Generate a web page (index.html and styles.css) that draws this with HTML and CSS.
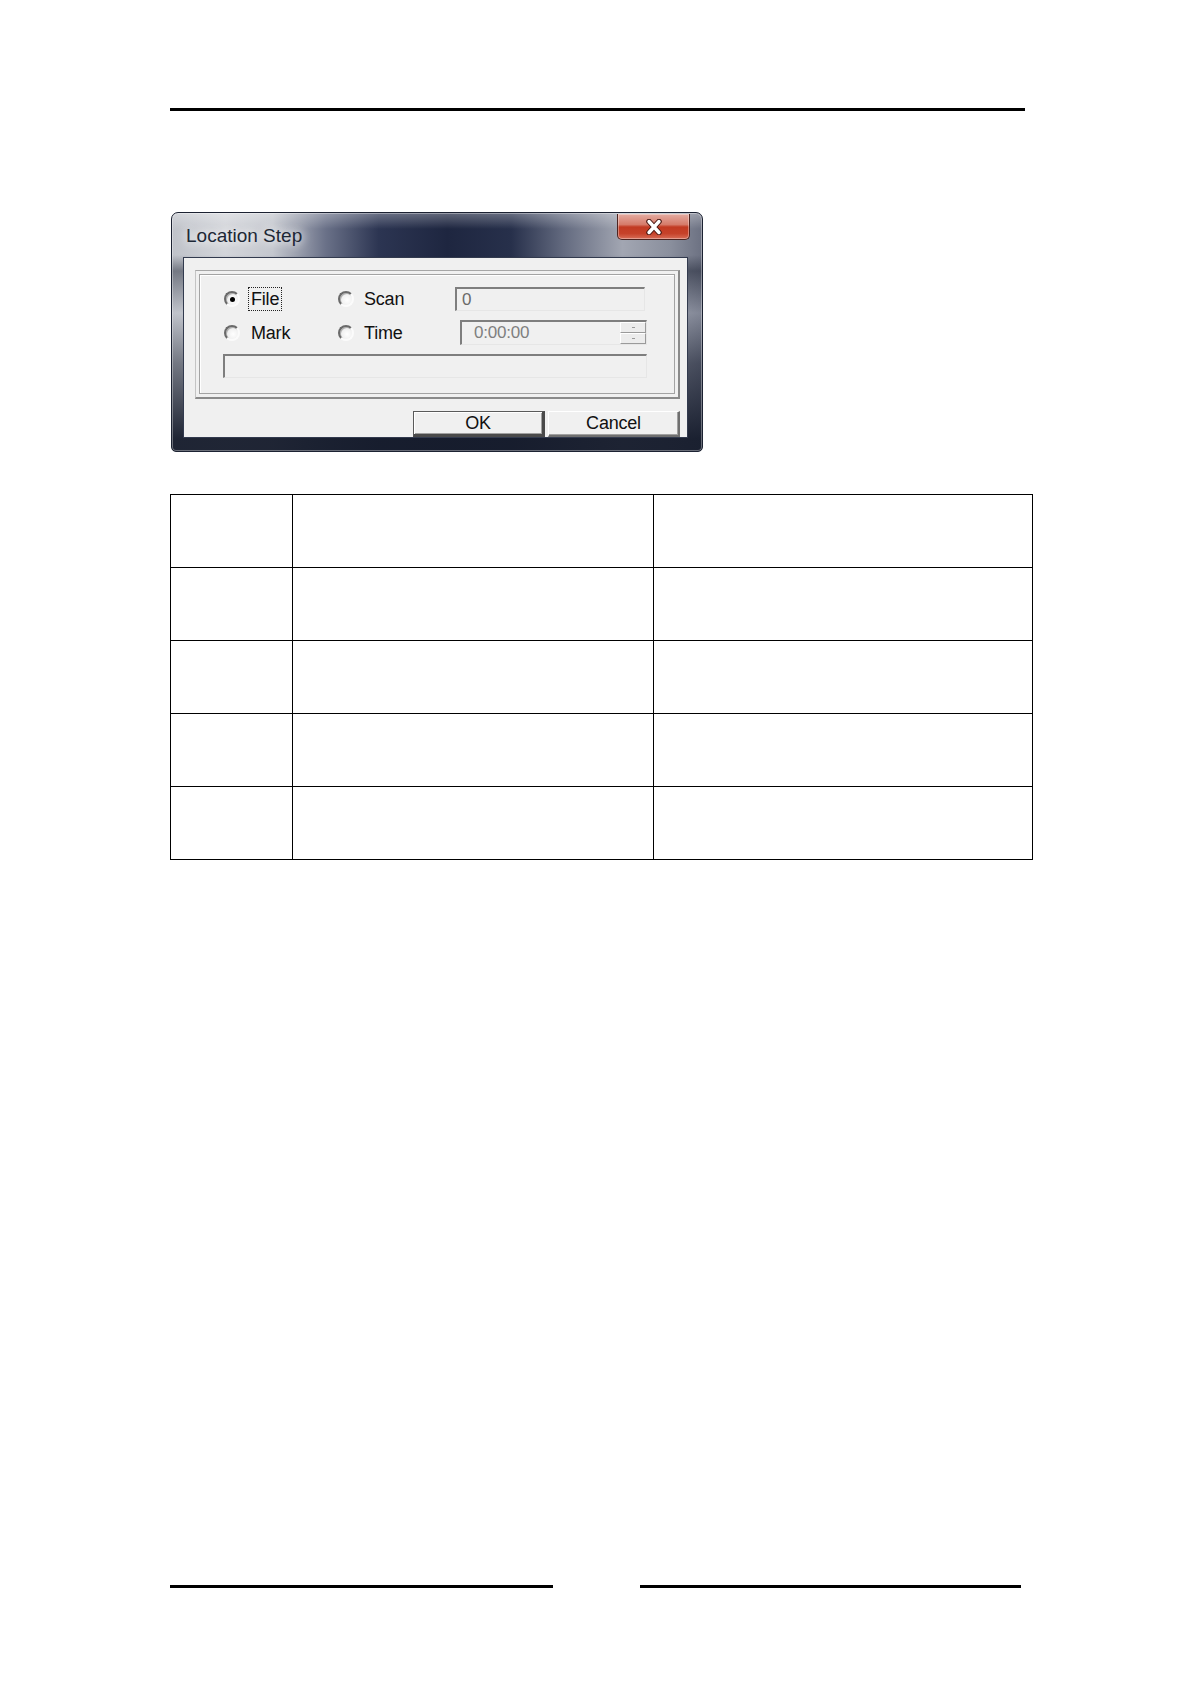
FILE: index.html
```html
<!DOCTYPE html>
<html lang="en">
<head>
<meta charset="utf-8">
<title>Location Step</title>
<link rel="stylesheet" href="styles.css">
</head>
<body>
<div class="page">
  <div class="rule rule-top"></div>

  <div class="dialog">
    <div class="titlebar">
      <span class="title">Location Step</span>
      <div class="close">
        <svg width="20" height="16" viewBox="0 0 20 16">
          <path d="M5 2.5 L15 13.5 M15 2.5 L5 13.5" stroke="#4a1a14" stroke-width="5.5" stroke-linecap="round" fill="none"/>
          <path d="M5 2.5 L15 13.5 M15 2.5 L5 13.5" stroke="#ffffff" stroke-width="3.4" stroke-linecap="round" fill="none"/>
        </svg>
      </div>
    </div>
    <div class="client">
      <div class="panel">
        <div class="panel-inner">
          <div class="grid">
            <div class="opt c1"><span class="radio checked"></span><span class="lbl focus">File</span></div>
            <div class="opt c2"><span class="radio"></span><span class="lbl">Scan</span></div>
            <div class="edit num"><span>0</span></div>
            <div class="opt c1"><span class="radio"></span><span class="lbl">Mark</span></div>
            <div class="opt c2"><span class="radio"></span><span class="lbl">Time</span></div>
            <div class="edit time"><span>0:00:00</span><div class="spin"><i></i><i></i></div></div>
          </div>
          <div class="status"></div>
        </div>
      </div>
      <div class="buttons">
        <div class="btn default">OK</div>
        <div class="btn">Cancel</div>
      </div>
    </div>
  </div>

  <table class="grid-table">
    <colgroup><col class="w1"><col class="w2"><col class="w3"></colgroup>
    <tr><td></td><td></td><td></td></tr>
    <tr><td></td><td></td><td></td></tr>
    <tr><td></td><td></td><td></td></tr>
    <tr><td></td><td></td><td></td></tr>
    <tr><td></td><td></td><td></td></tr>
  </table>

  <div class="footer">
    <div class="rule rule-left"></div>
    <div class="rule rule-right"></div>
  </div>
</div>
</body>
</html>
```
FILE: styles.css
```css
html, body { margin: 0; padding: 0; background: #ffffff; }
body { font-family: "Liberation Sans", Arial, sans-serif; }

.page { padding-left: 170px; padding-top: 108px; }

.rule { height: 3px; background: #000; }
.rule-top { width: 855px; }

/* ---------- dialog ---------- */
.dialog {
  margin-top: 101px;
  margin-left: 1px;
  width: 530px;
  height: 238px;
  border: 1px solid #1c2232;
  border-radius: 7px 7px 5px 5px;
  display: flex;
  flex-direction: column;
  box-shadow: inset 0 0 0 1px rgba(255,255,255,0.35);
  background:
    linear-gradient(180deg, rgba(255,255,255,0.30) 0, rgba(255,255,255,0) 16px),
    linear-gradient(180deg, rgba(22,28,44,0) 0, rgba(22,28,44,0) 42px, rgba(22,28,44,0.45) 58px, rgba(190,194,204,0.25) 100px, rgba(22,28,44,0.45) 150px, rgba(22,28,44,0.95) 226px),
    linear-gradient(90deg, #bfc2c9 0%, #d3d5da 10%, #c4c7ce 19%, #6a7188 29%, #2c3552 39%, #1e2640 52%, #27304b 64%, #646b80 74%, #a2a6b2 85%, #8a8f9d 94%, #6c7182 100%);
  overflow: hidden;
}

.titlebar {
  height: 44px;
  display: flex;
  justify-content: space-between;
  align-items: flex-start;
  padding-left: 14px;
  padding-right: 12px;
}
.title {
  margin-top: 12px;
  font-size: 19px;
  line-height: 22px;
  color: #1d2735;
  text-shadow: 0 0 8px rgba(255,255,255,0.95), 0 0 14px rgba(255,255,255,0.8);
}
.close {
  margin-top: 1px;
  width: 71px;
  height: 25px;
  border: 1px solid #4e2420;
  border-top: none;
  border-radius: 0 0 5px 5px;
  background: linear-gradient(180deg, #e4aca2 0%, #d67b6a 42%, #c23a22 52%, #c6422a 78%, #d86d57 100%);
  box-shadow: inset 0 0 0 1px rgba(255,255,255,0.35);
  display: flex;
  align-items: center;
  justify-content: center;
}

.client {
  margin: 0 14px 13px 11px;
  height: 179px;
  border: 1px solid #323a4e;
  background: #f0f0f0;
  display: flex;
  flex-direction: column;
  font-size: 18px;
  letter-spacing: -0.2px;
  color: #111;
}

.panel {
  margin: 12px 0 0 11px;
  width: 476px;
  border-style: solid;
  border-width: 1px 2px 2px 1px;
  border-color: #a6a6a6 #8a8a8a #8a8a8a #c4c4c4;
  padding: 3px;
}
.panel-inner {
  border: 1px solid #a3a3a3;
  box-shadow: inset 1px 1px 0 #ffffff;
  padding: 12px 24px 15px 23px;
}

.grid {
  display: grid;
  grid-template-columns: 116px 116px 192px;
  grid-template-rows: 24px 25px;
  row-gap: 9px;
}

.opt { display: flex; align-items: center; }
.c1 .radio { margin-left: 1px; }
.c2 .radio { margin-left: -1px; }
.c1 .lbl { margin-left: 11px; }
.c2 .lbl { margin-left: 10px; }
.lbl { line-height: 20px; }
.lbl.focus {
  margin-left: 8px;
  padding: 1px 2px;
  border: 1px dotted #222;
}

.radio {
  position: relative;
  box-sizing: border-box;
  width: 16px;
  height: 16px;
  border-radius: 50%;
  border: 2px solid;
  border-color: #6a6a6a #fbfbfb #fbfbfb #6a6a6a;
  background: radial-gradient(circle at 60% 60%, #ffffff 0, #e4e4e4 100%);
  box-shadow: inset 1px 1px 0 #b0b0b0;
  flex: none;
}
.radio.checked::after {
  content: "";
  position: absolute;
  left: 4px; top: 4px;
  width: 5px; height: 5px;
  border-radius: 50%;
  background: #000;
}

.edit {
  box-sizing: border-box;
  border-style: solid;
  border-width: 2px 1px 1px 2px;
  border-color: #7e7e7e #e6e6e6 #e6e6e6 #7e7e7e;
  background: #f0f0f0;
  display: flex;
  align-items: center;
  font-size: 17px;
}
.edit.num { width: 190px; padding-left: 5px; color: #6a6a6a; }
.edit.time {
  width: 187px;
  margin-left: 5px;
  padding-left: 12px;
  color: #7f7f7f;
  justify-content: space-between;
}
.spin {
  width: 26px;
  height: 100%;
  display: flex;
  flex-direction: column;
}
.spin i {
  flex: 1;
  box-sizing: border-box;
  border-style: solid;
  border-width: 1px;
  border-color: #ffffff #9a9a9a #9a9a9a #ffffff;
  background: #ececec;
  display: flex;
  align-items: center;
  justify-content: center;
}
.spin i::after {
  content: "";
  width: 3px;
  height: 1px;
  background: #9a9a9a;
}

.status {
  margin-top: 9px;
  width: 424px;
  height: 24px;
  box-sizing: border-box;
  border-style: solid;
  border-width: 2px 1px 1px 2px;
  border-color: #7e7e7e #e6e6e6 #e6e6e6 #7e7e7e;
  background: #f0f0f0;
}

.buttons {
  margin-top: 12px;
  display: flex;
  justify-content: flex-end;
  gap: 3px;
  padding-right: 7px;
}
.btn {
  box-sizing: border-box;
  width: 132px;
  height: 26px;
  display: flex;
  align-items: center;
  justify-content: center;
  background: #f0f0f0;
  font-size: 18px;
  color: #111;
  border-style: solid;
  border-width: 1px 2px 2px 1px;
  border-color: #ffffff #6f6f6f #6f6f6f #ffffff;
  box-shadow: inset -1px -1px 0 #a0a0a0;
}
.btn.default {
  border-width: 1px 3px 3px 1px;
  border-color: #5a5a5a #4a4a4a #4a4a4a #5a5a5a;
  box-shadow: inset 1px 1px 0 #ffffff, inset -1px -1px 0 #a0a0a0;
}

/* ---------- table ---------- */
.grid-table {
  margin-top: 42px;
  width: 862px;
  border-collapse: collapse;
  table-layout: fixed;
}
.grid-table col.w1 { width: 122px; }
.grid-table col.w2 { width: 361px; }
.grid-table col.w3 { width: 379px; }
.grid-table td {
  border: 1px solid #000;
  height: 72px;
  padding: 0;
}

/* ---------- footer ---------- */
.footer {
  margin-top: 725px;
  display: flex;
  gap: 87px;
}
.rule-left { width: 383px; }
.rule-right { width: 381px; }
```
